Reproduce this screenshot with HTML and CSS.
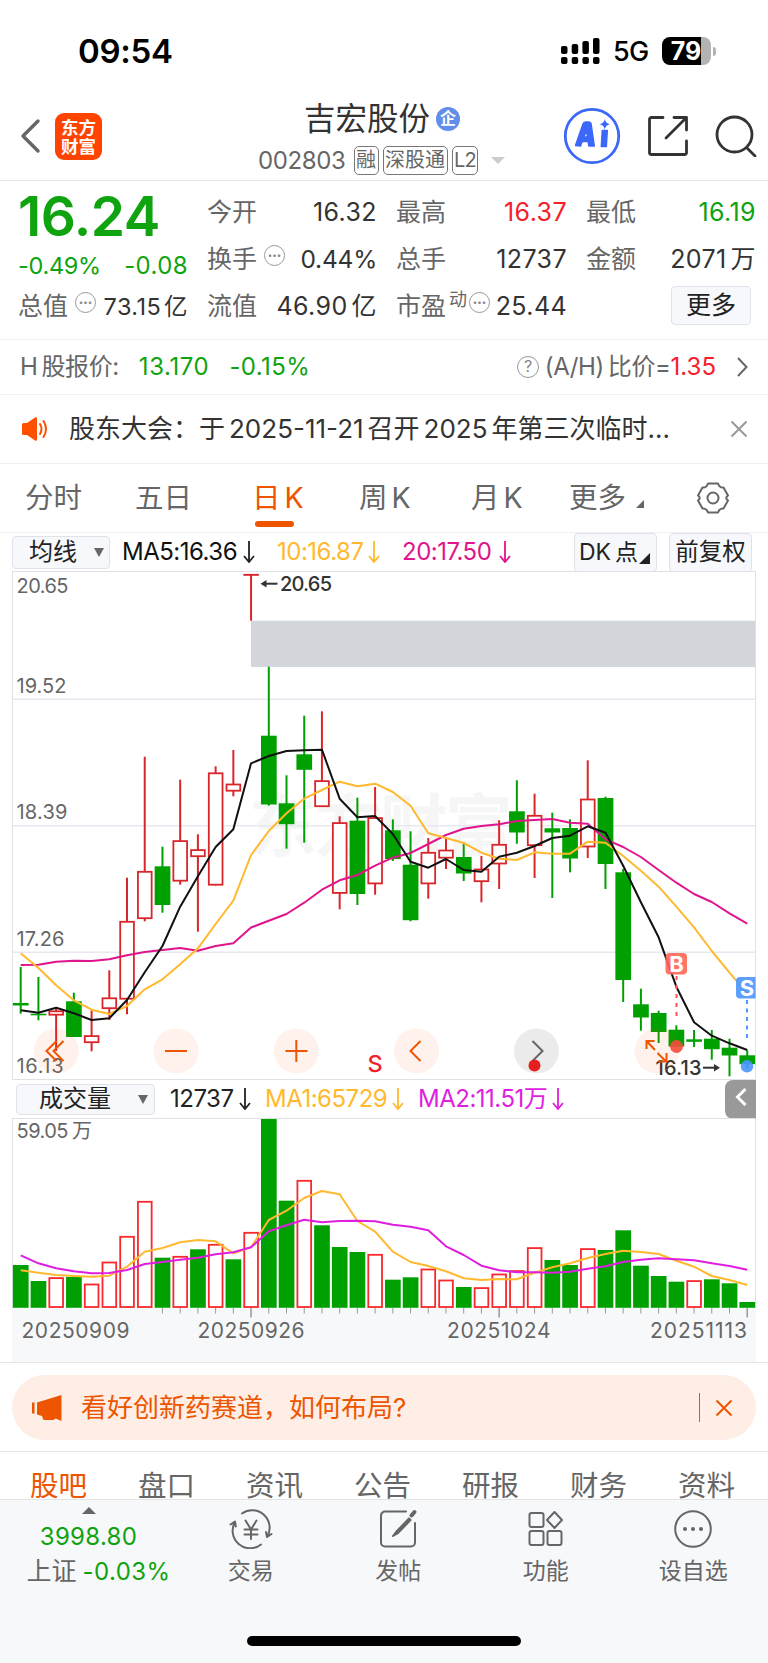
FILE: index.html
```html
<!DOCTYPE html>
<html lang="zh-CN">
<head>
  <meta charset="UTF-8">
  <title>吉宏股份 002803</title>
  <meta name="viewport" content="width=device-width, initial-scale=1.0">
  <link rel="stylesheet" href="styles.css">
</head>
<body>
  <div class="status">
    <span class="time">09:54</span>
    <svg class="signal" width="39" height="28" viewBox="0 0 39 28">
      <g>
        <rect x="0" y="9" width="6.5" height="8" rx="2"/><rect x="10.7" y="7" width="6.5" height="10" rx="2"/><rect x="21.4" y="4" width="6.5" height="13" rx="2"/><rect x="32" y="1" width="6.5" height="16" rx="2"/>
        <rect x="0" y="20" width="6.5" height="7" rx="2"/><rect x="10.7" y="20" width="6.5" height="7" rx="2"/><rect x="21.4" y="20" width="6.5" height="7" rx="2"/><rect x="32" y="20" width="6.5" height="7" rx="2"/>
      </g>
    </svg>
    <span class="net">5G</span>
    <div class="battery">79</div>
    <div class="battery-cap"></div>
  </div>

  <header class="head">
    <svg class="back" width="21" height="36" viewBox="0 0 21 36"><path d="M18 3 3 18l15 15" fill="none" stroke="#666" stroke-width="3.4" stroke-linecap="round" stroke-linejoin="round"/></svg>
    <div class="logo">东方<br>财富</div>
    <div class="title">
      <div class="name">吉宏股份<span class="corp">企</span></div>
      <div class="code"><span class="num">002803</span><span class="tag">融</span><span class="tag">深股通</span><span class="tag l2">L2</span><i class="down"></i></div>
    </div>
    <svg class="ai" width="58" height="58" viewBox="0 0 58 58">
      <circle cx="29" cy="29" r="26.7" fill="none" stroke="#3b68fb" stroke-width="2.8"/>
      <g fill="#3b68fb" stroke="#3b68fb" stroke-width="1.5" stroke-linejoin="round">
        <path fill-rule="evenodd" d="M12.500 38.500 20 17q.8-2 3-2h2.500q2.300 0 2.600 2l3.200 22h-5.500l-.7-4.500h-6L17.500 39zM20.800 30h3.700l-.8-6.500z"/>
        <path d="M39.300 23.500h5l-1 16h-5z"/>
      </g>
      <path d="M41.800 12q.9 4.300 5 5.200-4.100.9-5 5.200-.9-4.300-5-5.200 4.100-.9 5-5.200z" fill="#3b68fb"/>
    </svg>
    <svg class="share" width="42" height="42" viewBox="0 0 42 42" fill="none" stroke="#333" stroke-width="2.800" stroke-linecap="round" stroke-linejoin="round"><path d="M16 2.500H4.500a2 2 0 0 0-2 2v33a2 2 0 0 0 2 2h33a2 2 0 0 0 2-2V26M19 23 39.500 2.500M27 2.500h12.500V15"/></svg>
    <svg class="search" width="42" height="42" viewBox="0 0 42 42" fill="none" stroke="#333" stroke-width="2.800" stroke-linecap="round"><circle cx="19.500" cy="19.500" r="17.500"/><path d="m32 33 8 8"/></svg>
  </header>

  <section class="quote">
    <div class="price">16.24</div>
    <div class="cell"><label>今开</label><b>16.32</b></div>
    <div class="cell"><label>最高</label><b class="red">16.37</b></div>
    <div class="cell"><label>最低</label><b class="green">16.19</b></div>

    <div class="cell change"><b class="green pct">-0.49%</b><b class="green">-0.08</b></div>
    <div class="cell"><label>换手</label><i class="dots">•••</i><b class="pct">0.44%</b></div>
    <div class="cell"><label>总手</label><b>12737</b></div>
    <div class="cell"><label>金额</label><b>2071<span class="cn">万</span></b></div>

    <div class="cell total"><label>总值</label><i class="dots">•••</i><b>73.15<span class="cn">亿</span></b></div>
    <div class="cell"><label>流值</label><b>46.90<span class="cn">亿</span></b></div>
    <div class="cell"><label>市盈</label><sup>动</sup><i class="dots tight">•••</i><b>25.44</b></div>
    <div class="cell end"><button class="more">更多</button></div>
  </section>

  <section class="hshare">
    <span>H<span class="cn">股报价:</span></span>
    <span class="green h-price">13.170</span>
    <span class="green h-rate">-0.15%</span>
    <i class="ask">?</i>
    <span class="ratio">(A/H)<span class="cn">比价=</span></span><span class="red">1.35</span>
    <svg class="go" width="12" height="20" viewBox="0 0 12 20"><path d="m2 1 8.500 9L2 19" fill="none" stroke="#666" stroke-width="2"/></svg>
  </section>

  <section class="news">
    <svg width="26" height="24" viewBox="0 0 26 24"><path d="M0 7.500q0-1.500 1.500-1.500H5l8-5.500q2-1 2 1v21q0 2-2 1L5 18H1.500Q0 18 0 16.500z" fill="#ff5000"/><path d="M18 7q3 5 0 10M21.500 4q5 8 0 16" fill="none" stroke="#ff5000" stroke-width="2" stroke-linecap="round"/></svg>
    <p>股东大会：于<span class="cn">2025-11-21</span><span class="cn">召开</span><span class="cn">2025</span><span class="cn">年第三次临时</span>...</p>
    <svg width="18" height="18" viewBox="0 0 18 18"><path d="m1.500 1.500 15 15m0-15-15 15" stroke="#999" stroke-width="2"/></svg>
  </section>

  <nav class="periods">
    <a>分时</a>
    <a>五日</a>
    <a class="on">日<span class="cn">K</span></a>
    <a>周<span class="cn">K</span></a>
    <a>月<span class="cn">K</span></a>
    <a>更多<i class="corner"></i></a>
    <svg width="34" height="34" viewBox="0 0 34 34" fill="none" stroke="#666" stroke-width="2" stroke-linejoin="round"><path d="M12 2.500h10q1.500 4.500 5.500 4l4.500 8q-3.500 2.500 0 5l-4.500 8q-4-.5-5.500 4H12q-1.500-4.500-5.500-4l-4.500-8q3.500-2.500 0-5l4.500-8q4 .5 5.500-4z"/><circle cx="17" cy="17" r="5.500"/></svg>
  </nav>

  <div class="ma">
    <button class="pick">均线<i class="drop"></i></button>
    <span class="ma5">MA5:16.36</span><svg class="fall" viewBox="0 0 12 22"><path d="M6 0v20M1 15l5 6 5-6"/></svg>
    <span class="ma10">10:16.87</span><svg class="fall c10" viewBox="0 0 12 22"><path d="M6 0v20M1 15l5 6 5-6"/></svg>
    <span class="ma20">20:17.50</span><svg class="fall c20" viewBox="0 0 12 22"><path d="M6 0v20M1 15l5 6 5-6"/></svg>
    <button class="dk">DK<span class="cn">点</span><i class="corner"></i></button>
    <button class="fq">前复权</button>
  </div>

  <svg class="kline" id="kline" width="768" height="509" viewBox="0 571 768 509"></svg>

  <div class="vol-bar">
    <button class="pick wide">成交量<i class="drop"></i></button>
    <span class="v0">12737</span><svg class="fall" viewBox="0 0 12 22"><path d="M6 0v20M1 15l5 6 5-6"/></svg>
    <span class="v1">MA1:65729</span><svg class="fall c10" viewBox="0 0 12 22"><path d="M6 0v20M1 15l5 6 5-6"/></svg>
    <span class="v2">MA2:11.51万</span><svg class="fall cv" viewBox="0 0 12 22"><path d="M6 0v20M1 15l5 6 5-6"/></svg>
    <button class="fold"><svg width="12" height="20" viewBox="0 0 12 20"><path d="m10.500 2-8 8 8 8" fill="none" stroke="#fff" stroke-width="3"/></svg></button>
  </div>

  <svg class="volume" id="volume" width="768" height="244" viewBox="0 1118 768 244"></svg>

  <div class="promo">
    <div class="banner">
      <svg width="32" height="28" viewBox="0 0 32 28" fill="#ed5500"><path d="M1 8.500h2.500v11H1zM6 8.500 30.500 1v26l-6-2.500-2 1.500H12.500l-1.500-4-5-1.500z"/></svg>
      <span>看好创新药赛道，如何布局?</span>
      <i class="bar"></i>
      <svg width="18" height="18" viewBox="0 0 18 18"><path d="m1.500 1.500 15 15m0-15-15 15" stroke="#ed5500" stroke-width="2"/></svg>
    </div>
  </div>

  <nav class="tabs">
    <a class="on">股吧</a><a>盘口</a><a>资讯</a><a>公告</a><a>研报</a><a>财务</a><a>资料</a>
  </nav>

  <footer class="dock">
    <div class="index">
      <i class="up"></i>
      <div class="green point">3998.80</div>
      <div class="idx-line">上证<span class="green">-0.03%</span></div>
    </div>
    <div class="item">
      <svg width="44" height="40" viewBox="0 0 44 40"><path d="M13 4.500A17.500 17.500 0 0 1 38 28M32 35.500A17.500 17.500 0 0 1 6 13M1.500 15.500l4.500-3 .8 5M42.500 25l-4.500 3-1-5M22 20.500V30M15.500 20.500h13M15.500 25.500h13M16.500 11.500l5.500 9 5.500-9"/></svg>
      <span>交易</span>
    </div>
    <div class="item">
      <svg width="44" height="40" viewBox="0 0 44 40"><path d="M30 2.500H9A4 4 0 0 0 5 6.500v27a4 4 0 0 0 4 4h26a4 4 0 0 0 4-4V14"/><path d="M38.500 3 35.500 6.500" stroke-width="4"/><path d="m33 9.500-13 13.500-3 4 4.500-2.500L34.500 11z" fill="#666"/></svg>
      <span>发帖</span>
    </div>
    <div class="item">
      <svg width="44" height="40" viewBox="0 0 44 40"><rect x="5.500" y="4" width="14" height="14" rx="2"/><rect x="5.500" y="22" width="14" height="14" rx="2"/><rect x="23.500" y="22" width="14" height="14" rx="2"/><path d="m30.500 3 7.500 8-7.500 8-7.500-8z"/></svg>
      <span>功能</span>
    </div>
    <div class="item">
      <svg width="44" height="40" viewBox="0 0 44 40"><circle cx="22" cy="20" r="17.800"/><g fill="#666" stroke="none"><circle cx="14" cy="20" r="2"/><circle cx="22" cy="20" r="2"/><circle cx="30" cy="20" r="2"/></g></svg>
      <span>设自选</span>
    </div>
    <div class="home"></div>
  </footer>

  <script src="chart.js"></script>
</body>
</html>
```
FILE: styles.css
```css
* {
  box-sizing: border-box;
}

body {
  margin: 0;
  width: 768px;
  height: 1663px;
  overflow: hidden;
  background: #fff;
  color: #333;
  font-family: Inter, "Noto Sans CJK SC", sans-serif;
  font-size: 24px;
  line-height: 1;
}

i {
  font-style: normal;
}

button {
  font: inherit;
  color: #222;
  background: #f7f8fb;
  border: 1px solid #dfe2e8;
  border-radius: 4px;
  padding: 0;
  white-space: nowrap;
}

svg {
  flex: none;
}

.red { color: #f4202a; }
.green { color: #0fa30f; }

/* thin gap between latin and chinese text */
.cn {
  margin-left: 4px;
}

/* status bar */
.status {
  height: 102px;
  display: flex;
  align-items: center;
  color: #000;
}

.time {
  width: 483px;
  margin-left: 78px;
  font-size: 33px;
  font-weight: 600;
  letter-spacing: -0.3px;
}

.net {
  width: 48px;
  margin-left: 13px;
  font-size: 27px;
  font-weight: 500;
  letter-spacing: -0.7px;
}

.battery {
  width: 49px;
  height: 28px;
  margin-left: 1px;
  border-radius: 8px;
  background: linear-gradient(90deg, #000 79%, #b3b3b3 79%);
  color: #fff;
  font-size: 25px;
  font-weight: 700;
  line-height: 28px;
  text-align: center;
  text-indent: -1px;
}

.battery-cap {
  width: 3px;
  height: 9px;
  margin-left: 2px;
  border-radius: 0 4px 4px 0;
  background: #b3b3b3;
}

/* header */
.head {
  height: 79px;
  display: flex;
  align-items: center;
  border-bottom: 1px solid #e3e4e6;
  padding-bottom: 10px;
}

.back {
  margin-left: 20px;
}

.logo {
  width: 47px;
  height: 47px;
  margin-left: 14px;
  border-radius: 9px;
  background: #ff4400;
  color: #fff;
  font-family: "Noto Sans CJK SC", sans-serif;
  font-size: 17.500px;
  font-weight: 700;
  line-height: 19.500px;
  text-align: center;
  padding-top: 4px;
}

.title {
  width: 461px;
  padding-left: 156px;
}

.name {
  display: flex;
  align-items: center;
  padding-left: 46px;
  height: 34px;
  margin-top: 4px;
  font-size: 31.500px;
}

.corp {
  width: 24px;
  height: 24px;
  margin-left: 6px;
  border-radius: 50%;
  background: #628dea;
  color: #fff;
  font-size: 16px;
  font-weight: 700;
  line-height: 23px;
  text-align: center;
}

.code {
  display: flex;
  align-items: center;
  margin-top: 10px;
  margin-bottom: -1px;
  color: #666;
}

.code .num {
  width: 95.500px;
  font-size: 24px;
  letter-spacing: -0.4px;
}

.tag {
  height: 29px;
  margin-right: 4px;
  padding: 0 1.500px;
  border: 1.500px solid #777;
  border-radius: 5px;
  font-size: 20px;
  line-height: 26px;
}

.l2 {
  letter-spacing: -0.8px;
}

.down {
  margin-left: 9px;
  border: 7px solid transparent;
  border-top-color: #ccc;
  border-bottom: 0;
}

.share {
  margin-left: 26px;
}

.search {
  margin-left: 26px;
}

/* quote */
.quote {
  height: 159px;
  padding: 8px 12px 0 19px;
  display: grid;
  grid-template-columns: 169px 169px 170px 169px;
  grid-template-rows: 47px 47px 47px;
  column-gap: 20px;
  border-bottom: 1px solid #eff0f2;
}

.price {
  color: #0fa30f;
  font-size: 55px;
  font-weight: 600;
  line-height: 54px;
  letter-spacing: -0.5px;
  text-indent: -1px;
}

.cell {
  display: flex;
  align-items: center;
  font-size: 25px;
  white-space: nowrap;
}

.cell label {
  margin-left: -1px;
  color: #666;
}

.cell b {
  margin-left: auto;
  font-weight: 400;
  letter-spacing: 0.4px;
}

.cell .pct {
  font-size: 24.500px;
  letter-spacing: -0.2px;
}

.change {
  padding-top: 12px;
  font-size: 24px;
}

.change .pct {
  margin-left: -1px;
  font-size: 23.500px;
  letter-spacing: -0.3px;
}

.total b {
  font-size: 23.500px;
}

.total .cn {
  margin-left: 3px;
}

.dots {
  width: 21px;
  height: 21px;
  margin: -9px 0 0 7px;
  border: 1.500px solid #999;
  border-radius: 50%;
  color: #888;
  font-size: 8px;
  line-height: 18px;
  text-align: center;
}

.dots.tight {
  margin-left: 2px;
}

.cell sup {
  margin: -14px 0 0 3px;
  color: #666;
  font-size: 18px;
}

.end {
  justify-content: flex-end;
  padding-right: 5px;
}

.more {
  width: 80px;
  height: 39px;
  margin-top: -3px;
  font-size: 25px;
}

/* h share row */
.hshare {
  height: 55px;
  padding: 0 20px;
  display: flex;
  align-items: center;
  border-bottom: 1px solid #eff0f2;
  color: #666;
  letter-spacing: -0.4px;
  white-space: nowrap;
}

.h-price {
  margin-left: 20px;
  letter-spacing: 0.6px;
}

.h-rate {
  margin-left: 20px;
  letter-spacing: 0.4px;
}

.ask {
  width: 22px;
  height: 22px;
  margin-left: auto;
  border: 1.500px solid #999;
  border-radius: 50%;
  color: #888;
  font-size: 16px;
  line-height: 19px;
  text-align: center;
}

.ratio {
  margin-left: 6px;
}

.hshare .red {
  letter-spacing: 0;
}

.go {
  margin-left: 20px;
}

/* news */
.news {
  height: 69px;
  padding: 0 20px 0 22px;
  display: flex;
  align-items: center;
  border-bottom: 1px solid #eff0f2;
}

.news p {
  width: 662px;
  margin: 0 0 0 21px;
  font-size: 26px;
  white-space: nowrap;
}

/* period tabs */
.periods {
  height: 69px;
  padding: 0 38px 0 25px;
  display: grid;
  grid-template-columns: 110px 117px 107px 112px 98px 1fr 34px;
  align-items: center;
  border-bottom: 1px solid #eff0f2;
  color: #666;
  font-size: 28.500px;
}

.periods a {
  position: relative;
}

.periods .on {
  color: #ed5500;
}

.periods .on::after {
  content: "";
  position: absolute;
  left: 3px;
  top: 37px;
  width: 39px;
  height: 6px;
  border-radius: 3px;
  background: #ed5500;
}

.corner {
  display: inline-block;
  margin-left: 10px;
  border-left: 8px solid transparent;
  border-bottom: 8px solid #666;
}

/* indicator bars */
.ma, .vol-bar {
  height: 38px;
  display: flex;
  align-items: center;
  font-size: 24px;
  color: #111;
  letter-spacing: -0.5px;
  white-space: nowrap;
}

.ma {
  padding-left: 12px;
}

.pick {
  width: 98px;
  height: 33px;
  display: flex;
  align-items: center;
  padding-left: 16px;
  letter-spacing: 0;
}

.drop {
  margin-left: 17px;
  border: 5px solid transparent;
  border-top: 9px solid #666;
  border-bottom: 0;
}

.fall {
  width: 12px;
  height: 22px;
  fill: none;
  stroke: #222;
  stroke-width: 1.800;
}

.ma5 { width: 121px; margin-left: 12px; }
.ma10 { width: 91px; margin-left: 22px; color: #ffb92e; }
.ma20 { width: 97px; margin-left: 22px; color: #e0148c; }
.c10 { stroke: #ffb92e; }
.c20 { stroke: #e0148c; }
.cv { stroke: #e01ee0; }

.dk {
  width: 83px;
  height: 39px;
  margin-left: 63px;
  padding-left: 4px;
  text-align: left;
  font-size: 23px;
}

.dk .corner {
  margin: 0 0 -4px 1px;
  border-left-width: 11px;
  border-bottom: 11px solid #222;
}

.fq {
  width: 83px;
  height: 39px;
  margin-left: 12px;
  font-size: 23.500px;
}

.kline, .volume {
  display: block;
}

.vol-bar {
  padding-left: 16px;
}

.wide {
  width: 139px;
  height: 31px;
  padding-left: 22px;
}

.wide .drop {
  margin-left: 27px;
}

.v0 { width: 69px; margin-left: 15px; color: #222; }
.v1 { width: 127px; margin-left: 14px; color: #ffb92e; }
.v2 { width: 134px; margin-left: 14px; color: #e01ee0; }

.fold {
  width: 31px;
  height: 39px;
  margin-left: auto;
  margin-right: 12px;
  border: 0;
  border-radius: 8px 0 0 8px;
  background: #999;
}

/* promo banner */
.promo {
  height: 90px;
  padding: 12px 12px 0;
  border-top: 1px solid #e3e4e6;
  border-bottom: 1px solid #e3e4e6;
}

.banner {
  height: 65px;
  padding: 0 23px 0 19px;
  display: flex;
  align-items: center;
  border-radius: 33px;
  background: #feeee5;
  color: #ed5500;
  font-size: 26px;
}

.banner span {
  margin-left: 18px;
}

.bar {
  width: 1.500px;
  height: 29px;
  margin: 0 15px 0 auto;
  background: #ed5500;
}

/* content tabs, cut off by the dock */
.tabs {
  height: 47px;
  padding: 20px 33px 0 30px;
  display: flex;
  justify-content: space-between;
  overflow: hidden;
  color: #666;
  font-size: 28.500px;
}

.tabs .on {
  color: #ed5500;
}

/* bottom dock */
.dock {
  position: relative;
  height: 164px;
  display: flex;
  border-top: 1px solid #e3e4e6;
  background: #f7f8fa;
  color: #666;
}

.index {
  width: 177px;
  display: flex;
  flex-direction: column;
  align-items: center;
  padding-top: 7px;
}

.up {
  border: 7px solid transparent;
  border-bottom-color: #666;
  border-top: 0;
}

.point {
  margin-top: 11px;
  font-size: 24px;
  letter-spacing: 0.3px;
}

.idx-line {
  margin: 10px 0 0 20px;
  font-size: 25px;
  white-space: nowrap;
}

.idx-line span {
  margin-left: 6px;
  font-size: 24px;
  letter-spacing: 0.4px;
}

.item {
  width: 147.500px;
  display: flex;
  flex-direction: column;
  align-items: center;
  padding-top: 9px;
  font-size: 23px;
}

.item svg {
  fill: none;
  stroke: #666;
  stroke-width: 2;
  stroke-linecap: round;
  stroke-linejoin: round;
}

.item span {
  margin-top: 11px;
}

.home {
  position: absolute;
  left: 247px;
  bottom: 17px;
  width: 274px;
  height: 10px;
  border-radius: 5px;
  background: #000;
}

/* chart text */
.axis {
  fill: #666;
  font-size: 20px;
}

.mark {
  fill: #333;
  font-size: 20px;
  font-weight: 500;
}

.badge {
  fill: #fff;
  font-size: 22px;
  font-weight: 700;
  text-anchor: middle;
}

.watermark {
  fill: #f6f6f6;
  font-family: "Noto Sans CJK SC", sans-serif;
  font-size: 68px;
  font-weight: 700;
}
```
FILE: chart.js
```javascript
const RED = "#d9262b", GREEN = "#00a000";
const X0 = 20.7, STEP = 17.72;
const cx = i => X0 + i * STEP;

// [up, high, body top, body bottom, low]
const candles = [
  [0,967,1003,1005.500,1013.700],[0,977,1013.700,1015.300,1020.300],[1,1007.700,1010.500,1015.500,1051],
  [0,992.700,1001.300,1037,1037],[1,1010.300,1035.300,1043,1051.300],[1,970.300,997.500,1009,1020],
  [1,877.700,921,999.500,1014.300],[1,756.700,871,919,921.300],[0,846.700,866.300,905,912.700],
  [1,779.700,840.300,881.500,884.700],[1,834.300,849.300,857,931.700],[1,766.300,772.500,885.500,885.500],
  [1,750,783.700,791.500,796.300],[1,574.500,574,575.500,620.700],[0,666.700,735.700,804.500,805.700],
  [0,775.300,803.300,824.200,848.700],[0,715.700,754.300,769.800,842.700],[1,711.300,780.300,807,807],
  [1,816.300,822.300,893.700,909.300],[0,797.700,820.700,894,905],[1,787,817.300,884.200,894.700],
  [0,819.300,830.300,859,861],[0,831.300,864.700,920.200,921.300],[1,838,852,884.200,898.700],
  [1,838,849.700,858.500,869],[0,843.700,857,873.500,881],[1,856,868.700,882,902.300],
  [1,820.300,844,864.300,889],[0,780.300,811.300,832.500,843.700],[1,793.700,815,846,878],
  [0,812.700,828.300,832.500,898],[0,819.300,828,858.500,872.300],[1,760.300,798.700,847.300,858],
  [0,796.700,798,864,889],[0,869,872.300,980,1002],[0,988.700,1004.300,1017.500,1030.700],
  [0,1010.700,1013,1032,1043],[0,1025.300,1029.700,1046.500,1047.700],[0,1030,1039.300,1041.800,1047],
  [0,1030,1038.700,1049.200,1059.700],[0,1038.700,1047.700,1055.500,1076.300],[0,1050.300,1055.300,1064.200,1069]
];

const ma5 = [1010.3,1012.7,1007.7,1013.3,1020,1018.3,1000,972.3,946,906.7,876.3,847,829.3,763.3,756,751,750.3,749.7,798.7,817.3,816,834,861.7,867.7,859,870,871.7,856.7,852.7,846,838,835.7,826.3,832.7,865.7,902.3,937.3,986.7,1022.3,1035.7,1043.3,1050];
const ma10 = [953.3,968,985.3,1000.3,1009.7,1014,1006,989.3,979.3,964.3,948.3,924,900.7,855,831,813.3,798.7,790,781.7,786.3,783.7,792,805.7,833.3,838,843,852.7,858.7,860,852.3,853.7,853.7,841.7,842.7,856,870.7,886.7,906.7,927.3,951,972.7,993.3];
const ma20 = [965,964.7,961.7,960.7,961,959.3,955.3,952,950,948,950.7,946,943.3,927.5,920.7,914,902.7,889.7,880.3,875,865.7,857.7,853,844,835,828.7,826,824.3,821,820,819,822.7,823.7,839.3,847,857,870,882.7,894,902,913.3,923.7];

// bar tops, r = hollow
const vols = "g1265 g1281 r1277.3 g1277 r1283.7 r1261.7 r1236 r1201 g1257.7 r1256 g1249.3 r1244 g1259.3 r1232 g1119 g1200.7 r1180 g1225.3 g1247 g1252 r1254 g1279.7 g1277.3 r1268.7 r1279.7 g1287 r1287.3 r1273.7 r1270.3 r1247.3 g1260 g1265 r1248.3 g1250 g1230.3 g1265.7 g1276 g1281.7 r1280.3 g1279.3 g1283.3 g1302".split(" ");
const vma1 = [1270.3,1272.7,1275,1276,1276.7,1275.7,1266.7,1251.7,1248,1242.3,1240,1241.3,1253.3,1247.3,1220,1210.7,1198,1191,1194.3,1221,1231.7,1251.7,1262,1266,1271.3,1278.3,1280,1279,1279.3,1272.7,1267.3,1263.3,1258,1254,1250.7,1252,1254,1260.7,1266.7,1276,1280,1285];
const vma2 = [1255.3,1263.3,1268.3,1271.3,1273.3,1273,1270,1264,1262,1259.7,1257.7,1254.3,1252.3,1247.3,1231.3,1225.3,1219.7,1222.3,1221,1220.7,1221.3,1224.7,1226.7,1230.3,1246.3,1255,1265.7,1270.3,1272.3,1272.3,1272.7,1271.7,1268.7,1266.3,1262,1259.7,1258.3,1259.3,1260.3,1263.3,1266,1269.7];

const line = (ys, color) => `<polyline points="${ys.map((y, i) => cx(i) + "," + y).join(" ")}" fill="none" stroke="${color}" stroke-width="2" stroke-linejoin="round"/>`;
const stroke = (d, color, w = 2) => `<path d="${d}" fill="none" stroke="${color}" stroke-width="${w}"/>`;
const text = (cls, x, y, w, s) => `<text class="${cls}" x="${x}" y="${y}" textLength="${w}">${s}</text>`;

function box(i, top, bottom, up, color) {
  const x = cx(i) - 7.8;
  if (!up) return `<rect x="${x}" y="${top}" width="15.700" height="${bottom - top}" fill="${GREEN}"/>`;
  return `<rect x="${x + 1}" y="${top + 0.8}" width="13.700" height="${Math.max(bottom - top - 1.6, 0.1)}" fill="#fff" stroke="${color}" stroke-width="1.800"/>`;
}

function drawKline() {
  let s = `<text class="watermark" x="249" y="851" textLength="264">东方财富</text>`;
  s += `<rect x="251" y="620.700" width="504.500" height="46.300" fill="#d3d7dc"/>`;
  s += stroke("M12.500 699.300H755.500M12.500 825.700H755.500M12.500 952.200H755.500", "#e6e9f0", 1.5);
  s += `<rect x="12.500" y="571.500" width="743" height="508" fill="none" stroke="#dfe1e5"/>`;

  candles.forEach(([up, high, top, bottom, low], i) => {
    const c = up ? RED : GREEN;
    s += stroke(`M${cx(i)} ${high}V${low}`, c);
    s += box(i, top, bottom, up, c);
  });
  s += line(ma20, "#e0148c") + line(ma10, "#ffb92e") + line(ma5, "#111");

  s += text("axis", 16.5, 593, 52, "20.65") + text("axis", 16.5, 692.7, 50, "19.52") + text("axis", 16.5, 819, 51, "18.39");
  s += text("axis", 16.5, 946, 48, "17.26") + text("axis", 16.5, 1072.5, 47, "16.13");
  s += text("mark", 280, 591, 52, "20.65") + stroke("M264 583.700H277.500", "#333") + `<path d="m260.500 583.700 6-3.700v7.400z" fill="#333"/>`;
  s += text("mark", 655.5, 1075, 46, "16.13") + stroke("M703 1067.700H716", "#333") + `<path d="m720 1067.700-6-3.700v7.400z" fill="#333"/>`;

  [56.3, 176, 296.3, 416.5, 657].forEach(x => s += `<circle cx="${x}" cy="1051" r="22.500" fill="#ff5000" opacity=".08"/>`);
  s += `<circle cx="536.500" cy="1051" r="22.500" fill="#000" opacity=".08"/>`;
  s += stroke("M56.500 1041 46.500 1051l10 10M63.500 1041l-10 10 10 10M165 1051h22M285.500 1051h22M296.300 1040v22M420.500 1041l-10 10 10 10", "#ed5500");
  s += stroke("m532.500 1041 10 10-10 10", "#666");
  s += stroke("M655 1050 646.500 1041M646.500 1049v-8h8M657.500 1053l9 9M666.500 1053v8.500h-8", "#ed5500");
  s += `<circle cx="534.500" cy="1065.500" r="6" fill="#e3201f"/>`;
  s += `<text x="367.500" y="1071.500" font-size="23.500" fill="#f4202a" font-weight="500">S</text>`;

  s += `<rect x="665.500" y="953" width="21.500" height="21.500" rx="4" fill="#ff6655" opacity=".9"/><text class="badge" x="676.500" y="972">B</text>`;
  s += `<path d="M676.500 976V1018" stroke="#f55" stroke-width="2" stroke-dasharray="4 5"/><circle cx="676.500" cy="1046.500" r="6.500" fill="#f54b3c" opacity=".9"/>`;
  s += `<path d="M740 977H755.500V998.500H740a4 4 0 0 1-4-4V981a4 4 0 0 1 4-4z" fill="#4a96ff" opacity=".9"/><text class="badge" x="747" y="995.700">S</text>`;
  s += `<path d="M747 1000V1042" stroke="#4a96ff" stroke-width="2" stroke-dasharray="4 4.500"/><circle cx="747" cy="1066.300" r="6.200" fill="#4a96ff" opacity=".9"/>`;
  document.getElementById("kline").innerHTML = s;
}

function drawVolume() {
  let s = `<rect x="12" y="1308" width="744" height="54" fill="#f7f8fa"/>`;
  s += stroke("M12.500 1308V1118.500H755.500V1308", "#dfe1e5", 1);
  vols.forEach((v, i) => s += box(i, +v.slice(1), 1307.8, v[0] === "r", "#f8282c"));
  for (let i = 8; i < 42; i++) {
    const big = i === 13 || i === 27 || i === 41;
    s += stroke(`M${cx(i)} 1308V${big ? 1317.5 : 1313.5}`, "#999", big ? 1.5 : 1);
  }
  s += line(vma1, "#ffb92e") + line(vma2, "#e01ee0");
  s += text("axis", 16.5, 1138, 52, "59.05") + `<text class="axis" x="72" y="1138">万</text>`;
  const day = (x, w, d) => `<text class="axis" style="font-size:21px" x="${x}" y="1338" textLength="${w}">${d}</text>`;
  s += day(21.5, 108, "20250909") + day(197.5, 107, "20250926") + day(447, 103.5, "20251024") + day(650, 97, "20251113");
  document.getElementById("volume").innerHTML = s;
}

drawKline();
drawVolume();
```
